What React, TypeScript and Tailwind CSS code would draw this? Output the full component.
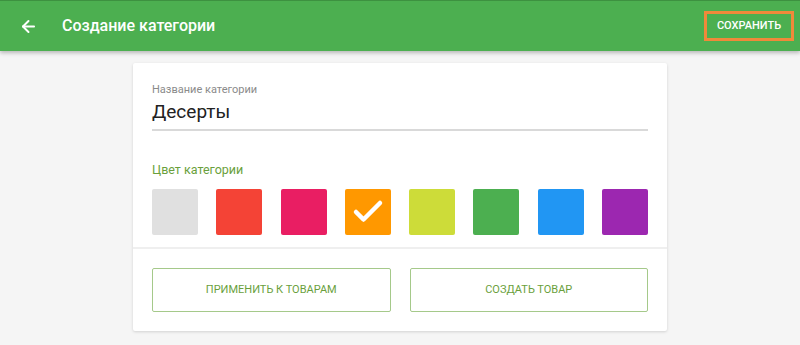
import { ArrowLeft, Check } from 'lucide-react';

const colors = ['#e0e0e0', '#f44336', '#e91e63', '#ff9800', '#cddc39', '#4caf50', '#2196f3', '#9c27b0'];

export default function App() {
  const selected = 3;

  return (
    <div className="w-[800px] h-[345px] bg-[#f5f5f5] overflow-hidden font-['Roboto',sans-serif]">
      {/* Шапка */}
      <header className="relative z-10 h-[51px] bg-[#4caf50] border-t border-[#3d9140] shadow-[0_2px_4px_rgba(0,0,0,0.25)] flex items-center pl-[19px] pr-[6px]">
        <ArrowLeft className="w-[19px] h-[19px] text-white" strokeWidth={2.5} />
        <h1 className="ml-[24px] text-[16px] font-medium text-white">Создание категории</h1>
        <button className="ml-auto w-[90px] h-[30px] border-[3px] border-[#f0893a] text-white text-[11px] font-medium flex items-center justify-center">
          СОХРАНИТЬ
        </button>
      </header>

      {/* Карточка */}
      <div className="mt-[12px] ml-[133px] w-[534px] bg-white rounded-[2px] shadow-[0_1px_3px_rgba(0,0,0,0.15)]">
        <div className="px-[19px] pt-[20px]">
          <p className="text-[11px] leading-[14px] text-[#8a8a8a]">Название категории</p>
          <p className="mt-[2px] text-[19px] leading-[26px] text-[#222]">Десерты</p>
          <div className="mt-[4px] h-[2px] bg-[#d9d9d9]" />

          <p className="mt-[31px] text-[12.5px] leading-[16px] text-[#6a9f3c]">Цвет категории</p>
          <div className="mt-[11px] flex justify-between">
            {colors.map((c, i) => (
              <div
                key={c}
                className="w-[46px] h-[46px] rounded-[2px] flex items-center justify-center"
                style={{ backgroundColor: c }}
              >
                {i === selected && <Check className="w-[36px] h-[36px] text-white" strokeWidth={3} />}
              </div>
            ))}
          </div>
        </div>

        <div className="mt-[12px] h-[2px] bg-[#efefef]" />

        <div className="px-[19px] pt-[19px] pb-[19px] flex gap-[19px]">
          <button className="flex-1 h-[44px] border border-[#a5c98a] rounded-[2px] text-[11px] text-[#6a9f3c]">
            ПРИМЕНИТЬ К ТОВАРАМ
          </button>
          <button className="flex-1 h-[44px] border border-[#a5c98a] rounded-[2px] text-[11px] text-[#6a9f3c]">
            СОЗДАТЬ ТОВАР
          </button>
        </div>
      </div>
    </div>
  );
}
